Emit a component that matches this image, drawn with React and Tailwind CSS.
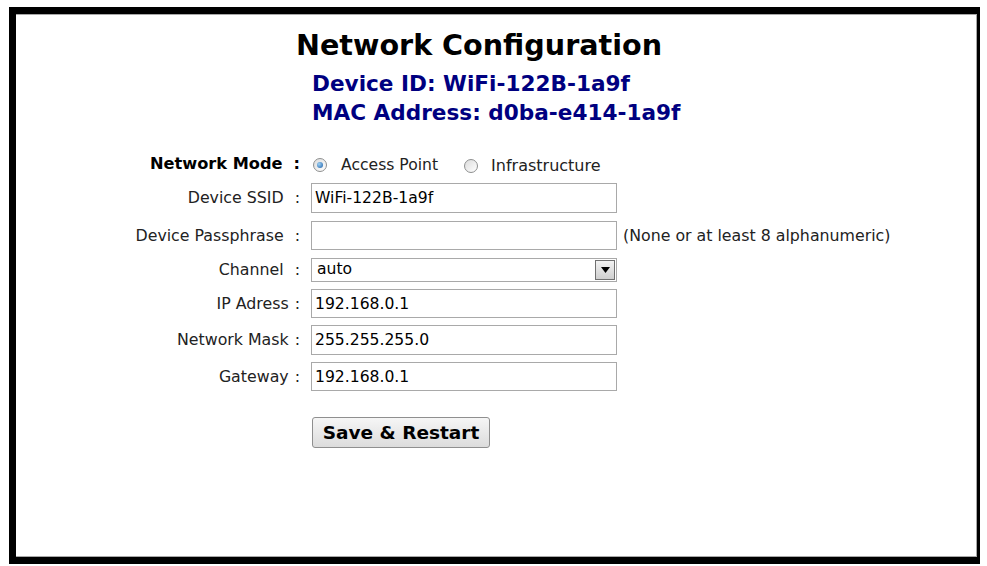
import React, { useState } from 'react';

const font = { fontFamily: '"DejaVu Sans", Verdana, sans-serif' };

const Radio = ({ checked, onClick }) => (
  <span
    onClick={onClick}
    className="inline-flex items-center justify-center w-[14px] h-[14px] rounded-full border border-[#8e8f8f] bg-gradient-to-br from-[#dcdcdc] to-[#ffffff] cursor-pointer"
  >
    {checked && (
      <span className="w-[6px] h-[6px] rounded-full bg-[radial-gradient(circle_at_35%_35%,#9fd2f5,#1d5fa8)]" />
    )}
  </span>
);

const Row = ({ label, tight, bold, children, className = '' }) => (
  <div className={`flex items-center ${className}`}>
    <div className={`w-[284px] text-right ${bold ? 'font-bold text-black text-[16.2px]' : 'text-[#222] text-[15.8px]'}`}>
      {label}
      <span className={tight ? 'ml-[6px]' : 'ml-[11px]'}>:</span>
    </div>
    <div className="ml-[11px] flex items-center">{children}</div>
  </div>
);

const TextInput = ({ value, h = 'h-[30px]' }) => (
  <input
    defaultValue={value}
    className={`w-[306px] ${h} border border-[#a9a9a9] px-[3px] text-[15.6px] text-black outline-none bg-white`}
    style={font}
  />
);

export default function App() {
  const [mode, setMode] = useState('ap');

  return (
    <div className="w-[987px] h-[566px] bg-white overflow-hidden" style={font}>
      <div className="ml-[9px] mt-[7px] w-[971px] h-[557px] border-black border-t-[7px] border-l-[7px] border-r-[3px] border-b-[7px]">
        <div className="h-full border-t border-r border-b border-[#a8a8a8] bg-white">
          <h1 className="ml-[280px] mt-[12px] text-[28.6px] font-bold text-black leading-[36px]">
            Network Configuration
          </h1>
          <div className="ml-[296px] mt-[6px] text-[#000080] font-bold text-[21.6px] leading-[29px]">
            <div>Device ID: WiFi-122B-1a9f</div>
            <div>MAC Address: d0ba-e414-1a9f</div>
          </div>

          <div className="mt-[25px] flex flex-col">
            <Row label="Network Mode" bold className="h-[24px]">
              <label className="flex items-center mt-[3px] ml-[2px]">
                <Radio checked={mode === 'ap'} onClick={() => setMode('ap')} />
                <span className="ml-[14px] text-[15.6px] text-[#222]">Access Point</span>
              </label>
              <label className="flex items-center ml-[26px] mt-[3px]">
                <Radio checked={mode === 'infra'} onClick={() => setMode('infra')} />
                <span className="ml-[13px] text-[16px] text-[#222]">Infrastructure</span>
              </label>
            </Row>
            <Row label="Device SSID" className="mt-[7px]">
              <TextInput value="WiFi-122B-1a9f" />
            </Row>
            <Row label="Device Passphrase" className="mt-[8px]">
              <TextInput value="" h="h-[29px]" />
              <span className="ml-[6px] text-[15.8px] text-[#222]">(None or at least 8 alphanumeric)</span>
            </Row>
            <Row label="Channel" className="mt-[8px]">
              <div className="w-[306px] h-[24px] border border-[#a9a9a9] flex items-center bg-white">
                <span className="flex-1 pl-[5px] text-[15.6px] text-black">auto</span>
                <span className="w-[20px] h-[20px] mr-[1px] border border-[#707070] bg-gradient-to-b from-[#f2f2f2] to-[#cfcfcf] flex items-center justify-center">
                  <svg width="9" height="6" viewBox="0 0 9 6"><path d="M0 0h9L4.5 6z" fill="#000" /></svg>
                </span>
              </div>
            </Row>
            <Row label="IP Adress" tight className="mt-[7px]">
              <TextInput value="192.168.0.1" h="h-[29px]" />
            </Row>
            <Row label="Network Mask" tight className="mt-[7px]">
              <TextInput value="255.255.255.0" />
            </Row>
            <Row label="Gateway" tight className="mt-[7px]">
              <TextInput value="192.168.0.1" h="h-[29px]" />
            </Row>
            <div className="ml-[296px] mt-[26px]">
              <button
                className="w-[178px] h-[31px] rounded-[3px] border border-[#8f8f8f] bg-gradient-to-b from-[#f6f6f6] to-[#dcdcdc] text-[18.5px] font-bold text-black"
                style={font}
              >
                Save &amp; Restart
              </button>
            </div>
          </div>
        </div>
      </div>
    </div>
  );
}
